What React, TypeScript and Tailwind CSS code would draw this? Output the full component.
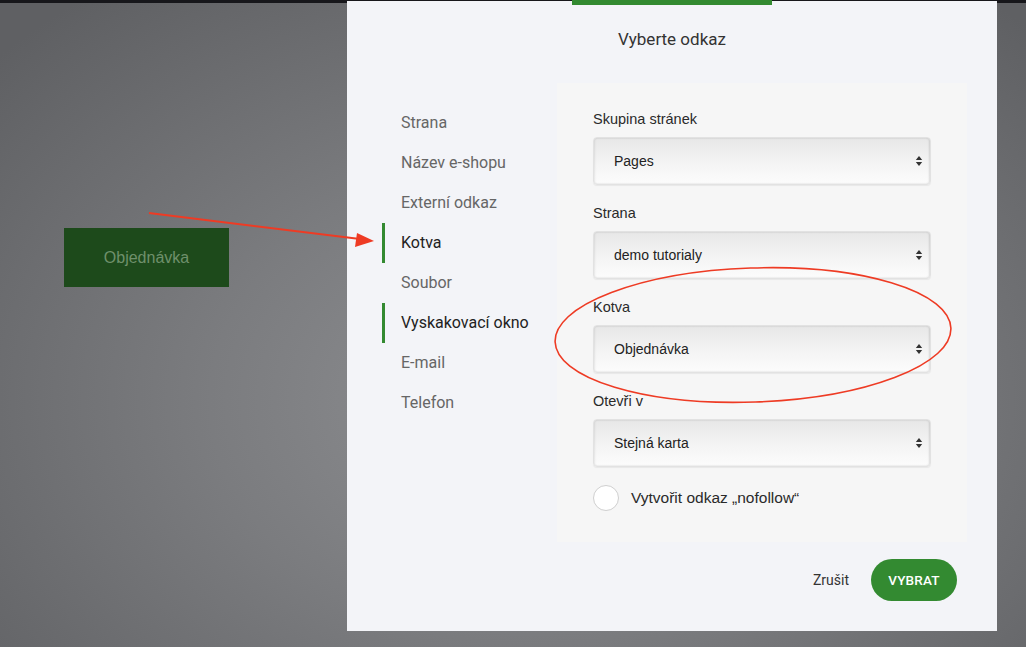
const menu = [
  { label: "Strana" },
  { label: "Název e-shopu" },
  { label: "Externí odkaz" },
  { label: "Kotva", active: true },
  { label: "Soubor" },
  { label: "Vyskakovací okno", active: true },
  { label: "E-mail" },
  { label: "Telefon" },
];

const fields = [
  { label: "Skupina stránek", value: "Pages" },
  { label: "Strana", value: "demo tutorialy" },
  { label: "Kotva", value: "Objednávka" },
  { label: "Otevři v", value: "Stejná karta" },
];

const SelectBox = ({ value }: { value: string }) => (
  <div className="flex items-center justify-between h-[48px] rounded-[4px] bg-gradient-to-b from-[#e7e7e7] via-[#f3f3f3] to-[#fcfcfc] border border-[#e2e2e2] shadow-[inset_1px_0_2px_rgba(0,0,0,0.08),inset_-1px_0_2px_rgba(0,0,0,0.12),0_1px_1px_rgba(0,0,0,0.06)] pl-[20px] pr-[6px]">
    <span className="text-[14px] text-[#222] font-['Liberation_Sans',Arial,sans-serif]">{value}</span>
    <svg width="8" height="12" viewBox="0 0 8 12" className="mr-[1px]">
      <path d="M4 1 L7.2 5 H0.8 Z" fill="#333" />
      <path d="M4 11 L7.2 7 H0.8 Z" fill="#333" />
    </svg>
  </div>
);

const App = () => {
  return (
    <div className="relative w-[1026px] h-[647px] overflow-hidden flex bg-[radial-gradient(ellipse_70%_80%_at_52%_62%,#8f9093_0%,#7b7c7f_45%,#5f6063_100%)] font-['Roboto','Liberation_Sans',sans-serif]">
      {/* Top strip */}
      <div className="absolute top-0 left-0 right-0 h-[3px] bg-[#17171b]"></div>

      {/* Page area behind the modal */}
      <div className="w-[347px] shrink-0 pt-[228px] pl-[64px]">
        <div className="w-[165px] h-[59px] bg-[#1d4a1b] flex items-center justify-center text-[16px] text-[#6f906b] font-['Liberation_Sans',Arial,sans-serif]">
          Objednávka
        </div>
      </div>

      {/* Modal */}
      <div className="relative z-10 w-[650px] h-[630px] mt-[1px] bg-[#f3f4f8] flex flex-col">
        <div className="absolute -top-[1px] left-[225px] w-[200px] h-[5px] bg-[#338a31]"></div>
        <div className="h-[82px] pt-[26px] text-center text-[17px] text-[#333]">Vyberte odkaz</div>

        <div className="flex">
          {/* Left menu */}
          <div className="w-[210px] pt-[20px] pl-[35px]">
            {menu.map((m) => (
              <div
                key={m.label}
                className={`h-[40px] flex items-center pl-[16px] border-l-[3px] text-[16px] ${
                  m.active ? "border-[#338a31] text-[#222]" : "border-transparent text-[#666]"
                }`}
              >
                {m.label}
              </div>
            ))}
          </div>

          {/* Right panel */}
          <div className="w-[410px] bg-[#f6f6f6] px-[36px] pt-[26px] pb-[31px] font-['Liberation_Sans',Arial,sans-serif]">
            {fields.map((f) => (
              <div key={f.label} className="mb-[18px] last:mb-0">
                <div className="h-[22px] flex items-center text-[14.5px] text-[#2a2a2a] mb-[6px]">{f.label}</div>
                <SelectBox value={f.value} />
              </div>
            ))}
            <div className="flex items-center mt-[13px] gap-[12px]">
              <div className="w-[26px] h-[26px] rounded-full bg-white border border-[#cfcfcf]"></div>
              <span className="text-[15.5px] text-[#2a2a2a]">Vytvořit odkaz „nofollow“</span>
            </div>
          </div>
        </div>

        {/* Footer */}
        <div className="flex items-center justify-end gap-[22px] pr-[40px] mt-[17px]">
          <span className="text-[14px] text-[#333]">Zrušit</span>
          <button className="w-[86px] h-[42px] rounded-full bg-[#338a31] text-white text-[13.5px] font-medium tracking-[0.2px]">
            VYBRAT
          </button>
        </div>
      </div>

      {/* Annotations */}
      <svg className="absolute inset-0 z-20 pointer-events-none" width="1026" height="647" viewBox="0 0 1026 647">
        <path d="M149 213 L360 239" stroke="#ee3b24" strokeWidth="2" fill="none" />
        <path d="M374 241 L357 233 L355 247 Z" fill="#ee3b24" />
        <ellipse cx="753" cy="335" rx="198" ry="67" transform="rotate(-2 753 335)" stroke="#ee3b24" strokeWidth="1.6" fill="none" />
      </svg>
    </div>
  );
};

export default App;
